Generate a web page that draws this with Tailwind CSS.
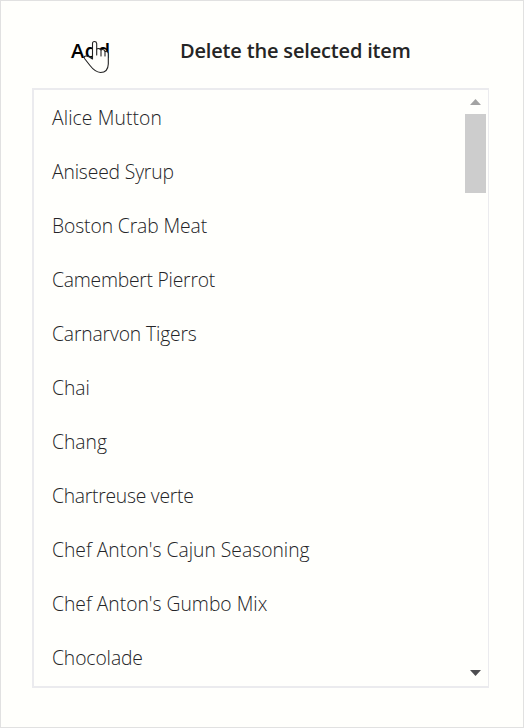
<!DOCTYPE html>
<html lang="en">
<head>
<meta charset="utf-8">
<title>Products</title>
<script src="https://cdn.jsdelivr.net/npm/@tailwindcss/browser@4"></script>
</head>
<body class="font-['Open_Sans','Noto_Sans',sans-serif]">
<main class="flex h-[728px] w-[524px] flex-col border border-[#e1e1e1] bg-[#fffffc] pr-[34px] pl-[31px]">
  <div class="relative flex h-[87px] shrink-0 items-center pt-3 pl-[39px] text-[20px] font-[560] whitespace-nowrap">
    <button class="w-[39px] text-left tracking-[0.5px] text-black">Add</button>
    <button class="ml-[70px] text-left tracking-[-0.17px] text-[#252525]">Delete the selected item</button>
    <svg class="absolute top-[39px] left-[51px] h-[36px] w-[28px]" viewBox="0 0 28 36" fill="#fffffc" stroke="#222" stroke-width="1.1" stroke-linejoin="round" stroke-linecap="round">
      <path d="M9.500 18V3.500Q9.500 1.500 11.500 1.500T13.700 3.500V9Q14.500 8.300 16 8.600T18 10Q19 9.300 20.500 9.700T22 11.500Q25.300 11 25.300 14V24Q25 32.500 17.500 32.500Q12 32 7 25.500L1.500 18.500Q.5 16 3 16T9.500 19Z"/>
      <path d="M13.700 9V15M18 10V16M22 11.500V16" fill="none"/>
    </svg>
  </div>
  <section class="flex h-[600px] shrink-0 justify-between overflow-hidden border-2 border-r-1 border-[#ebebee]">
    <ul class="pt-px pl-[18px] text-[19.3px] font-[330] whitespace-nowrap text-[#242427]">
      <li class="flex h-[54px] items-center tracking-[0.1px]">Alice Mutton</li>
      <li class="flex h-[54px] items-center tracking-[-0.15px]">Aniseed Syrup</li>
      <li class="flex h-[54px] items-center tracking-[-0.1px]">Boston Crab Meat</li>
      <li class="flex h-[54px] items-center tracking-[-0.23px]">Camembert Pierrot</li>
      <li class="flex h-[54px] items-center tracking-[-0.14px]">Carnarvon Tigers</li>
      <li class="flex h-[54px] items-center">Chai</li>
      <li class="flex h-[54px] items-center">Chang</li>
      <li class="flex h-[54px] items-center tracking-[-0.25px]">Chartreuse verte</li>
      <li class="flex h-[54px] items-center">Chef Anton's Cajun Seasoning</li>
      <li class="flex h-[54px] items-center">Chef Anton's Gumbo Mix</li>
      <li class="flex h-[54px] items-center tracking-[-0.1px]">Chocolade</li>
    </ul>
    <div class="mr-[2px] flex w-[21px] flex-col items-center">
      <svg class="mt-[9px] h-[6px] w-[11px] shrink-0" viewBox="0 0 11 6"><path d="M0 6L5.500 0L11 6Z" fill="#a3a3a3"/></svg>
      <div class="mt-[9px] h-[79px] w-[21px] shrink-0 bg-[#cdcdcd]"></div>
      <svg class="mt-auto mb-[10px] h-[6px] w-[11px] shrink-0" viewBox="0 0 11 6"><path d="M0 0H11L5.500 6Z" fill="#4d4d50"/></svg>
    </div>
  </section>
</main>
</body>
</html>
